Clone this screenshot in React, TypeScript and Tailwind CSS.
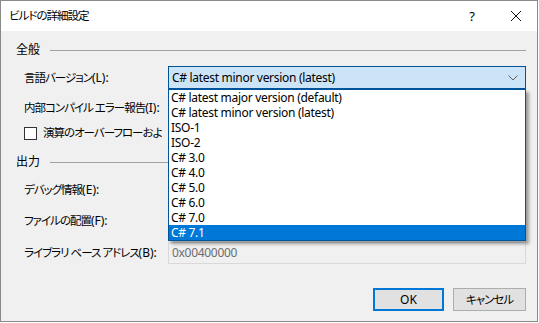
import { useState } from 'react';

const versions = [
  'C# latest major version (default)',
  'C# latest minor version (latest)',
  'ISO-1',
  'ISO-2',
  'C# 3.0',
  'C# 4.0',
  'C# 5.0',
  'C# 6.0',
  'C# 7.0',
  'C# 7.1',
];

function Chevron() {
  return (
    <svg width="10" height="6" viewBox="0 0 10 6" fill="none">
      <path d="M0.5 0.5L5 5L9.5 0.5" stroke="#606060" strokeWidth="1" />
    </svg>
  );
}

// narrow Japanese run, to approach Yu Gothic UI widths
function Jp({ children }: { children: React.ReactNode }) {
  return <span className="text-[11.5px] tracking-[-1px]">{children}</span>;
}

function GroupHeader({ label, className }: { label: string; className: string }) {
  return (
    <div className={`flex items-center h-[16px] pl-[15px] pr-[11px] ${className}`}>
      <span>{label}</span>
      <div className="flex-1 ml-[10px] h-px bg-[#a0a0a0]" />
    </div>
  );
}

function Row({
  label,
  hotkey,
  className,
  children,
}: {
  label: string;
  hotkey: string;
  className: string;
  children?: React.ReactNode;
}) {
  return (
    <div className={`flex items-center h-[23px] pl-[23px] ${className}`}>
      <span className="w-[144px] shrink-0 whitespace-nowrap">
        <Jp>{label}</Jp>
        {hotkey}
      </span>
      {children}
    </div>
  );
}

export default function App() {
  const [selected] = useState(9);

  return (
    <div className="w-[539px] h-[323px] bg-white text-[12px] text-black leading-none font-['Noto_Sans','Noto_Sans_CJK_JP',sans-serif] [font-feature-settings:'palt']">
      <div className="relative w-[538px] h-[322px] border border-[#8a8a8a] bg-[#f0f0f0] flex flex-col">
        {/* title bar */}
        <div className="h-[30px] bg-white flex items-center shrink-0">
          <span className="pl-[8px] flex-1">
            <Jp>ビルドの詳細設定</Jp>
          </span>
          <span className="w-[46px] text-center text-[13px]">?</span>
          <div className="w-[42px] flex justify-center">
            <svg width="10" height="10" viewBox="0 0 10 10">
              <path d="M0 0L10 10M10 0L0 10" stroke="#111" strokeWidth="1" />
            </svg>
          </div>
        </div>

        <GroupHeader label="全般" className="mt-[11px]" />

        <Row label="言語バージョン" hotkey="(L):" className="mt-[8px]">
          <div className="w-[358px] h-[23px] border border-[#005499] bg-[#cce4f7] flex items-center pl-[3px] pr-[7px] tracking-[-0.3px]">
            <span className="flex-1">{versions[1]}</span>
            <Chevron />
          </div>
        </Row>

        <Row label="内部コンパイル エラー報告" hotkey="(I):" className="mt-[7px]">
          <div className="w-[358px] h-[23px] border border-[#adadad] bg-[#e1e1e1]" />
        </Row>

        <div className="flex items-center h-[18px] mt-[5px] pl-[23px]">
          <div className="w-[13px] h-[13px] border border-[#333] bg-white shrink-0" />
          <span className="ml-[6px] w-[119px] overflow-hidden whitespace-nowrap">
            <Jp>演算のオーバーフローおよびアンダーフローをチェックする</Jp>(K)
          </span>
        </div>

        <GroupHeader label="出力" className="mt-[12px]" />

        <Row label="デバッグ情報" hotkey="(E):" className="mt-[8px]" />
        <Row label="ファイルの配置" hotkey="(F):" className="mt-[8px]" />

        <Row label="ライブラリ ベース アドレス" hotkey="(B):" className="mt-[9px]">
          <div className="w-[358px] h-[22px] border border-[#d9d9d9] flex items-center pl-[3px] text-[#6d6d6d] tracking-[-0.3px]">
            0x00400000
          </div>
        </Row>

        <div className="flex justify-end gap-[9px] pr-[11px] mt-[24px]">
          <button className="w-[71px] h-[23px] border-2 border-[#0078d7] bg-[#e1e1e1]">OK</button>
          <button className="w-[73px] h-[23px] border border-[#adadad] bg-[#e1e1e1]">
            <Jp>キャンセル</Jp>
          </button>
        </div>

        {/* open dropdown list */}
        <div className="absolute left-[167px] top-[88px] w-[358px] border border-[#005499] bg-white shadow-[3px_3px_3px_rgba(0,0,0,0.35)] tracking-[-0.3px]">
          {versions.map((v, i) => (
            <div
              key={v}
              className={`h-[15px] flex items-center pl-[2px] ${i === selected ? 'bg-[#0078d7] text-white' : ''}`}
            >
              {v}
            </div>
          ))}
        </div>
      </div>
    </div>
  );
}
